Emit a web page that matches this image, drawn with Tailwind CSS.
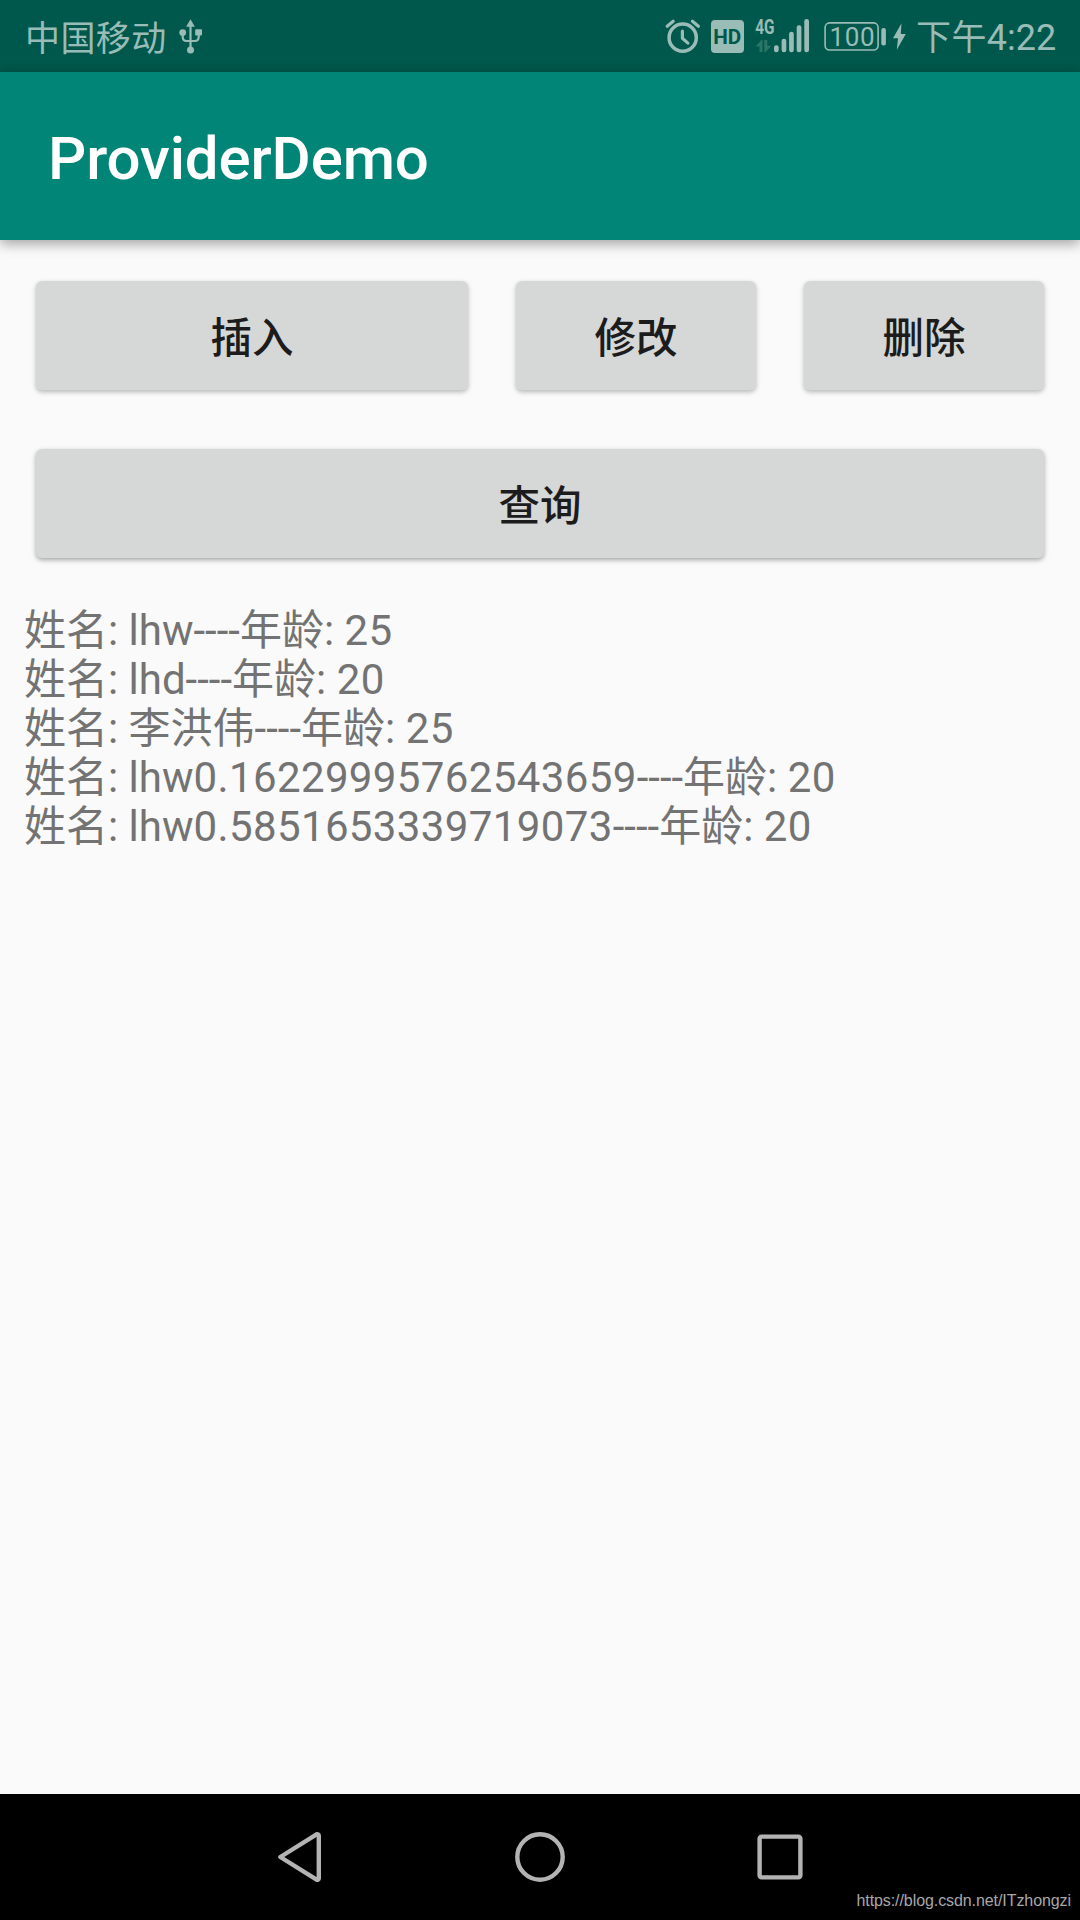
<!DOCTYPE html>
<html lang="zh-CN">
<head>
    <meta charset="UTF-8">
    <meta name="viewport" content="width=device-width, initial-scale=1.0">
    <title>ProviderDemo</title>
    <script src="https://cdn.jsdelivr.net/npm/@tailwindcss/browser@4"></script>
</head>
<body class="bg-[#fafafa] font-['Roboto','Noto_Sans_CJK_SC',sans-serif]">
<div class="w-[1080px] h-[1920px] flex flex-col overflow-hidden">
    <!-- Status bar -->
    <div class="h-[72px] shrink-0 bg-[#00574b] text-[#99bcb7] flex items-center justify-between pl-[25px] pr-6 text-[36px] leading-[72px] whitespace-nowrap">
        <div class="flex items-center gap-[9px]">
            <span class="w-[144px] pt-[7px] text-[35px] tracking-[0.4px]">中国移动</span>
            <svg class="w-[26px] h-[72px]" viewBox="178 0 26 72" fill="none" stroke="currentColor" stroke-width="2.2">
                <path d="M190.5 25V49M182.7 33v4q0 4 4 4h8q4 0 4-4v-4"/>
                <path d="M190.5 19.3l4.4 7.4h-8.8z" fill="currentColor" stroke="none"/>
                <circle cx="182.7" cy="32.6" r="3.4" fill="currentColor" stroke="none"/>
                <rect x="195.2" y="29.2" width="6.8" height="6.4" rx="1" fill="currentColor" stroke="none"/>
                <circle cx="190.5" cy="50" r="3.5" fill="currentColor" stroke="none"/>
            </svg>
        </div>
        <div class="flex items-center">
            <!-- Alarm, HD, signal, battery -->
            <svg class="w-[250px] h-[72px]" viewBox="664 0 250 72" fill="currentColor">
                <g fill="none" stroke="currentColor" stroke-width="3.5">
                    <circle cx="682.7" cy="37.7" r="13.6"/>
                    <path d="M682.4 31v7.3l5.5 4.8M667.2 26.2l6-5M692.4 21.2l6 5" stroke-linecap="round" stroke-linejoin="round" stroke-width="3.2"/>
                </g>
                <rect x="711" y="20" width="33" height="33" rx="4"/>
                <text x="713.3" y="44" font-size="21" font-weight="700" fill="#00574b" textLength="28" lengthAdjust="spacingAndGlyphs">HD</text>
                <text x="755.3" y="33.7" font-size="20" font-weight="700" textLength="19.3" lengthAdjust="spacingAndGlyphs">4G</text>
                <path d="M755.7 46.5l5.6-6.5h1.2v12h-3v-5.5zM764.3 40h3v5.8h4l-5.6 6.2h-1.4z" fill="#2b7468"/>
                <rect x="774" y="45.3" width="4.7" height="7" rx="2.2"/>
                <rect x="781.6" y="38.7" width="4.7" height="13.6" rx="2.2"/>
                <rect x="789.1" y="31.7" width="4.7" height="20.6" rx="2.2"/>
                <rect x="796.7" y="25.2" width="4.7" height="27.1" rx="2.2"/>
                <rect x="804.3" y="19" width="4.7" height="33.3" rx="2.2"/>
                <rect x="825.1" y="22.9" width="53" height="27.1" rx="4.5" fill="none" stroke="currentColor" stroke-width="1.6"/>
                <text x="829.5" y="45.7" font-size="26" font-weight="400" textLength="45" lengthAdjust="spacing">100</text>
                <rect x="881.3" y="28" width="4.6" height="17.5" rx="2"/>
                <path d="M901.5 23.3L893 38.2h5l-1.2 11.5 9-15.7h-5z"/>
            </svg>
            <span class="pl-[2px] w-[142px] pt-[5px]"><span class="text-[35px] tracking-[0.4px]">下午</span>4:22</span>
        </div>
    </div>

    <!-- App bar -->
    <header class="relative h-[168px] shrink-0 bg-[#008577] pl-12 flex items-center shadow-[0_4px_12px_rgba(0,0,0,0.35)]">
        <h1 class="text-white text-[60px] font-medium leading-[70px] pt-[6px] tracking-[-0.12px]">ProviderDemo</h1>
    </header>

    <!-- Buttons -->
    <main class="flex-1 pt-[41px]">
        <div class="flex px-9 gap-12 text-[#1c1c1c] text-[41.5px] font-medium">
            <button class="w-[432px] h-[109px] pt-[8px] rounded-[6px] bg-[#d6d7d7] shadow-[0_2px_5px_rgba(0,0,0,0.28)]">插入</button>
            <button class="w-[240px] h-[109px] pt-[8px] rounded-[6px] bg-[#d6d7d7] shadow-[0_2px_5px_rgba(0,0,0,0.28)]">修改</button>
            <button class="w-[240px] h-[109px] pt-[8px] rounded-[6px] bg-[#d6d7d7] shadow-[0_2px_5px_rgba(0,0,0,0.28)]">删除</button>
        </div>
        <div class="flex px-9 pt-[59px] text-[#1c1c1c] text-[41.5px] font-medium">
            <button class="w-full h-[109px] pt-[8px] rounded-[6px] bg-[#d6d7d7] shadow-[0_2px_5px_rgba(0,0,0,0.35)]">查询</button>
        </div>

        <!-- Query result -->
        <div class="mt-[48px] pl-6 text-[42px] leading-[49px] text-[#737373] whitespace-nowrap">
            <p>姓名: lhw----年龄: <span class="tracking-[0.42px]">25</span></p>
            <p>姓名: lhd----年龄: <span class="tracking-[0.42px]">20</span></p>
            <p>姓名: 李洪伟----年龄: <span class="tracking-[0.42px]">25</span></p>
            <p>姓名: lhw<span class="tracking-[0.38px]">0.16229995762543659</span>----年龄: <span class="tracking-[0.42px]">20</span></p>
            <p>姓名: lhw<span class="tracking-[0.38px]">0.5851653339719073</span>----年龄: <span class="tracking-[0.42px]">20</span></p>
        </div>
    </main>

    <!-- Navigation bar -->
    <nav class="relative h-[126px] shrink-0 bg-black">
        <svg class="w-full h-full" viewBox="0 1794 1080 126" fill="none" stroke="#b3b3b3" stroke-width="4.4" stroke-linejoin="round">
            <path d="M280.3 1857L316.6 1834.3a1.5 1.5 0 0 1 2.2 1.3V1878.4a1.5 1.5 0 0 1-2.2 1.3z"/>
            <circle cx="540" cy="1857" r="22.7"/>
            <rect x="759.6" y="1836.6" width="40.8" height="40.8" rx="2"/>
        </svg>
        <span class="absolute right-[9px] bottom-[9px] text-[16px] leading-[20px] tracking-[-0.08px] text-[#a8a8a8] font-['Liberation_Sans',sans-serif]">https://blog.csdn.net/ITzhongzi</span>
    </nav>
</div>
</body>
</html>
